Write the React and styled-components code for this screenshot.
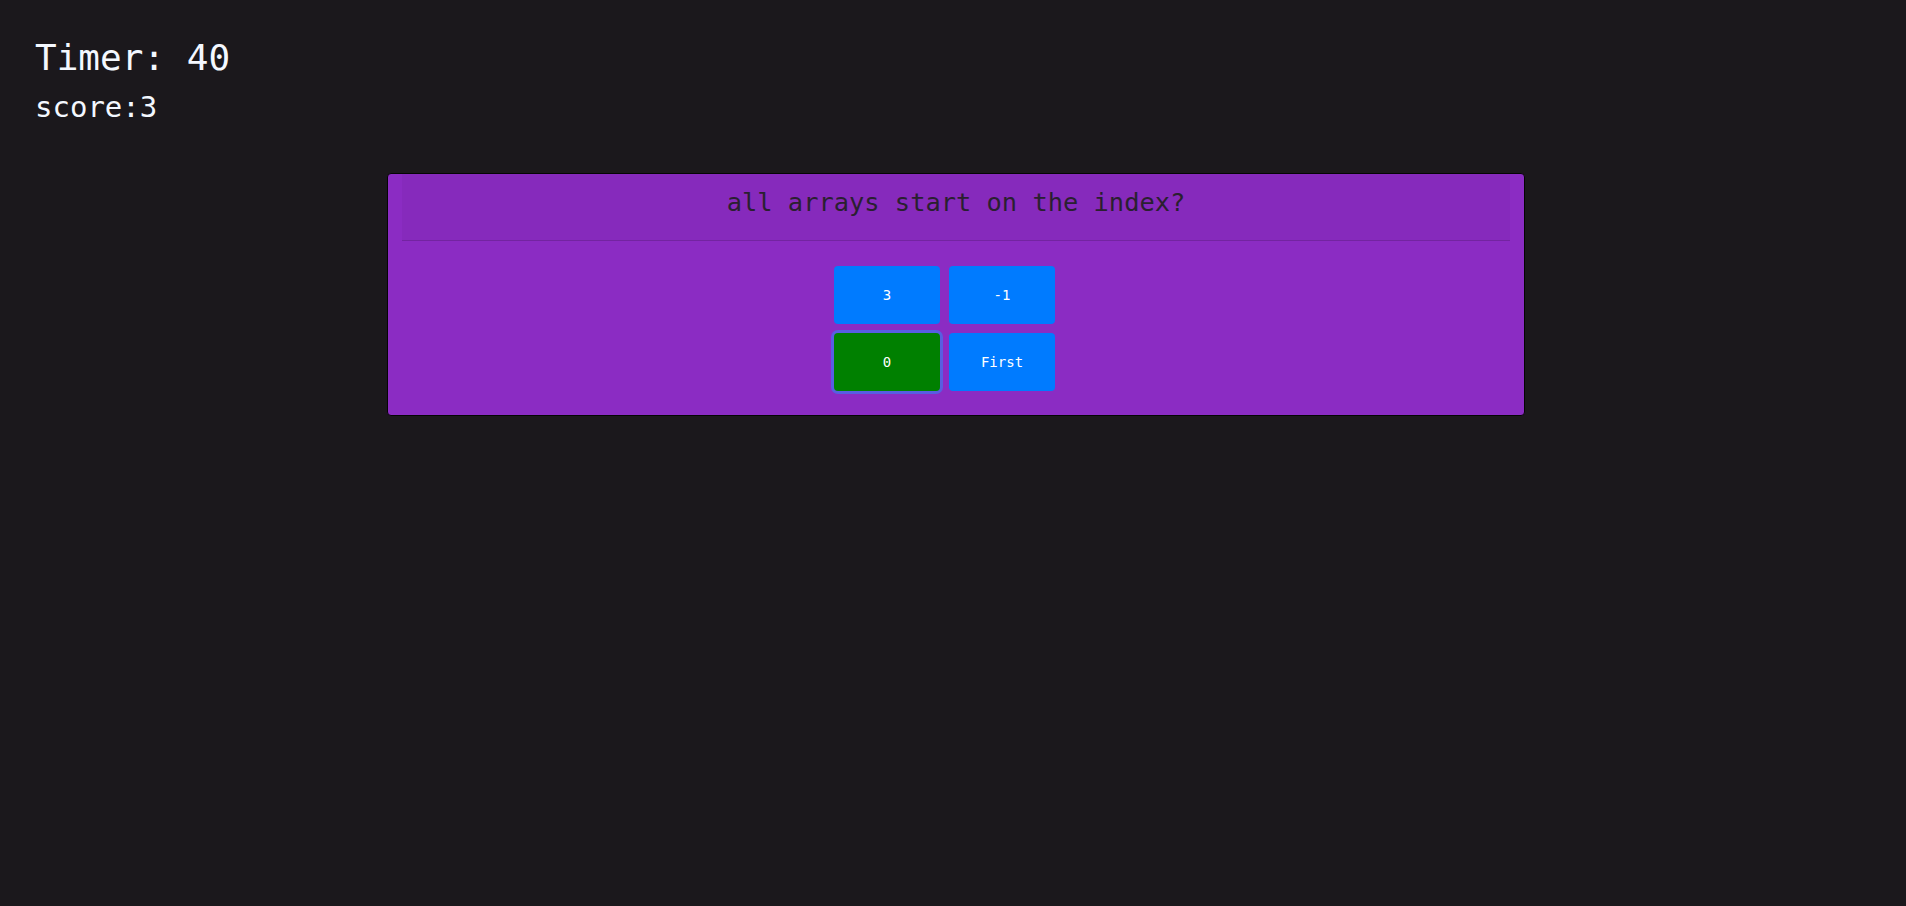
import styled, { createGlobalStyle } from 'styled-components';

const GlobalStyle = createGlobalStyle`
  html, body {
    margin: 0;
    padding: 0;
    background: #1b181c;
    font-family: "DejaVu Sans Mono", "Liberation Mono", monospace;
  }
`;

const Page = styled.main`
  min-height: 906px;
  padding: 36px 0 0 35px;
  box-sizing: border-box;
`;

const TimerText = styled.h1`
  margin: 0;
  font-size: 36px;
  line-height: 1.2;
  font-weight: 400;
  color: #f4f8ff;
`;

const ScoreText = styled.h3`
  margin: 11px 0 0;
  font-size: 29px;
  line-height: 1.2;
  font-weight: 400;
  color: #f4f8ff;
`;

const Card = styled.section`
  width: 1138px;
  box-sizing: border-box;
  margin: 48px 0 0 352px;
  background: #8b2cc3;
  border: 1px solid #050505;
  border-radius: 4px;
  padding: 0 14px 24px;
`;

const CardHeader = styled.div`
  background: rgba(0, 0, 0, 0.03);
  border-bottom: 1px solid rgba(0, 0, 0, 0.14);
  padding: 13px 0 23px;
  text-align: center;
`;

const Question = styled.h2`
  margin: 0;
  font-size: 25.4px;
  line-height: 1.2;
  font-weight: 400;
  color: #2a2030;
`;

const Answers = styled.div`
  display: grid;
  grid-template-columns: repeat(2, 106px);
  grid-auto-rows: 58px;
  gap: 9px;
  justify-content: center;
  padding: 25px 23px 0 0;
`;

const AnswerButton = styled.button`
  border: none;
  border-radius: 4px;
  background: ${(p) => (p.$correct ? '#008000' : '#007bff')};
  box-shadow: ${(p) => (p.$focused ? '0 0 0 3px rgba(38, 143, 255, 0.5)' : 'none')};
  color: #ffffff;
  font-family: inherit;
  font-size: 14px;
  cursor: pointer;
  padding: 0;
`;

export default function App() {
    const answers = [
        { text: '3' },
        { text: '-1' },
        { text: '0', correct: true },
        { text: 'First' },
    ];

    return (
        <>
            <GlobalStyle />
            <Page>
                <TimerText>Timer: 40</TimerText>
                <ScoreText>score:3</ScoreText>
                <Card>
                    <CardHeader>
                        <Question>all arrays start on the index?</Question>
                    </CardHeader>
                    <Answers>
                        {answers.map((a) => (
                            <AnswerButton key={a.text} $correct={a.correct} $focused={a.correct}>
                                {a.text}
                            </AnswerButton>
                        ))}
                    </Answers>
                </Card>
            </Page>
        </>
    );
}
